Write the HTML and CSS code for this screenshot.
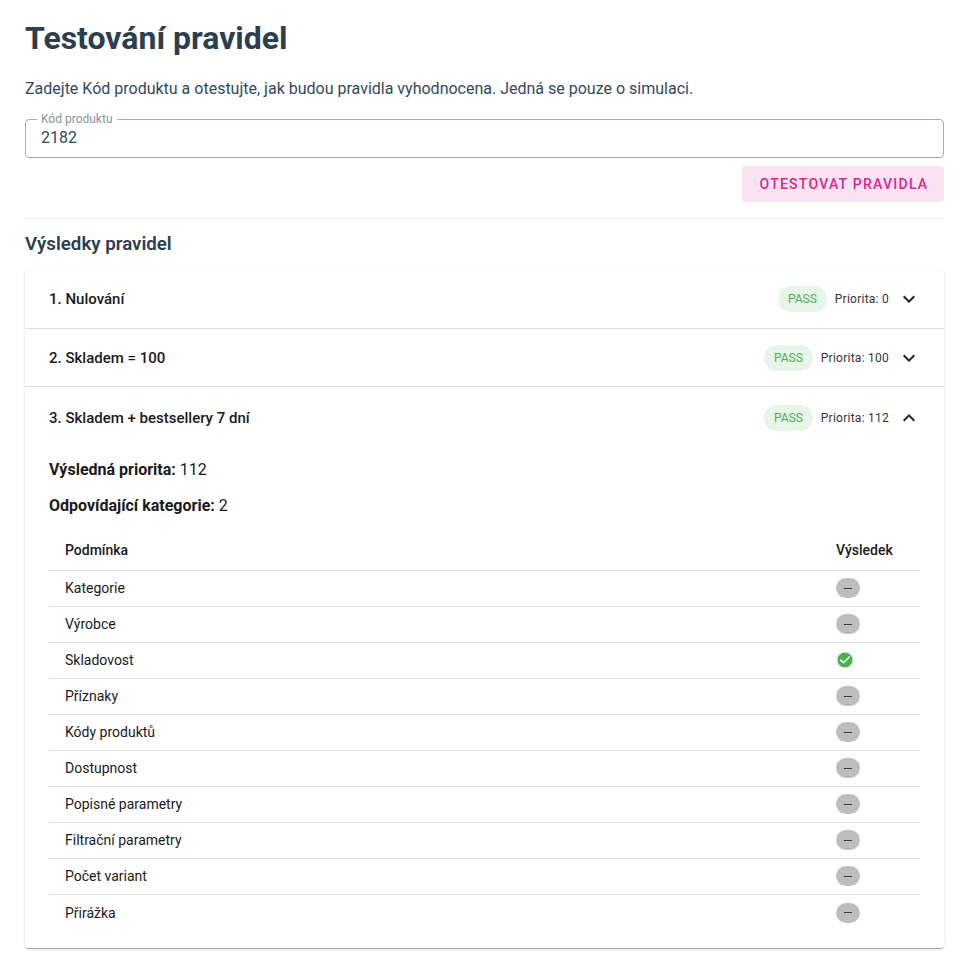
FILE: index.html
```html
<!DOCTYPE html>
<html lang="cs">
<head>
    <meta charset="UTF-8">
    <title>Testování pravidel</title>
    <link rel="stylesheet" href="styles.css">
</head>
<body>
    <main class="page">
        <h1 class="title">Testování pravidel</h1>
        <p class="intro">Zadejte Kód produktu a otestujte, jak budou pravidla vyhodnocena. Jedná se pouze o simulaci.</p>

        <fieldset class="field">
            <legend class="field-label">Kód produktu</legend>
            <input class="field-input" type="text" value="2182" aria-label="Kód produktu">
        </fieldset>

        <div class="actions">
            <button class="test-button" type="button">Otestovat pravidla</button>
        </div>

        <hr class="divider">

        <h2 class="subtitle">Výsledky pravidel</h2>

        <section class="accordion">
            <div class="rule">
                <div class="rule-header">
                    <span class="rule-name">1. Nulování</span>
                    <span class="pass">PASS</span>
                    <span class="priority">Priorita: 0</span>
                    <svg class="chevron" viewBox="0 0 24 24"><path d="M7.41 8.59 12 13.17l4.59-4.58L18 10l-6 6-6-6z"/></svg>
                </div>
            </div>
            <div class="rule">
                <div class="rule-header">
                    <span class="rule-name">2. Skladem = 100</span>
                    <span class="pass">PASS</span>
                    <span class="priority">Priorita: 100</span>
                    <svg class="chevron" viewBox="0 0 24 24"><path d="M7.41 8.59 12 13.17l4.59-4.58L18 10l-6 6-6-6z"/></svg>
                </div>
            </div>
            <div class="rule rule-open">
                <div class="rule-header">
                    <span class="rule-name">3. Skladem + bestsellery 7 dní</span>
                    <span class="pass">PASS</span>
                    <span class="priority">Priorita: 112</span>
                    <svg class="chevron" viewBox="0 0 24 24"><path d="M7.41 15.41 12 10.83l4.59 4.58L18 14l-6-6-6 6z"/></svg>
                </div>
                <div class="rule-body">
                    <p class="summary"><strong>Výsledná priorita:</strong> 112</p>
                    <p class="summary"><strong>Odpovídající kategorie:</strong> 2</p>
                    <table class="conditions">
                        <thead>
                            <tr><th>Podmínka</th><th class="result-col">Výsledek</th></tr>
                        </thead>
                        <tbody>
                            <tr><td>Kategorie</td><td class="result-col"><span class="na">---</span></td></tr>
                            <tr><td>Výrobce</td><td class="result-col"><span class="na">---</span></td></tr>
                            <tr>
                                <td>Skladovost</td>
                                <td class="result-col">
                                    <svg class="check" viewBox="0 0 24 24"><path d="M12 2C6.48 2 2 6.48 2 12s4.48 10 10 10 10-4.48 10-10S17.520 2 12 2zm-2 15-5-5 1.410-1.410L10 14.170l7.590-7.590L19 8l-9 9z"/></svg>
                                </td>
                            </tr>
                            <tr><td>Příznaky</td><td class="result-col"><span class="na">---</span></td></tr>
                            <tr><td>Kódy produktů</td><td class="result-col"><span class="na">---</span></td></tr>
                            <tr><td>Dostupnost</td><td class="result-col"><span class="na">---</span></td></tr>
                            <tr><td>Popisné parametry</td><td class="result-col"><span class="na">---</span></td></tr>
                            <tr><td>Filtrační parametry</td><td class="result-col"><span class="na">---</span></td></tr>
                            <tr><td>Počet variant</td><td class="result-col"><span class="na">---</span></td></tr>
                            <tr><td>Přirážka</td><td class="result-col"><span class="na">---</span></td></tr>
                        </tbody>
                    </table>
                </div>
            </div>
        </section>
    </main>
</body>
</html>
```

FILE: styles.css
```css
* {
    box-sizing: border-box;
    margin: 0;
    padding: 0;
}

body {
    background: #fff;
    color: #1a1a1a;
    font-family: Roboto, "Liberation Sans", sans-serif;
}

.page {
    padding: 16px 26px 24px 25px;
}

.title {
    color: #2c3e50;
    font-size: 32px;
    font-weight: 700;
    line-height: 44px;
    margin-bottom: 17px;
}

.intro {
    color: #34495e;
    font-size: 16px;
    line-height: 24px;
    margin-bottom: 12px;
}

.field {
    border: 1px solid #a5acb5;
    border-radius: 4px;
    height: 45px;
    padding: 0 15px;
}

.field-label {
    color: #8a949e;
    font-size: 12px;
    line-height: 12px;
    margin-left: -4px;
    padding: 0 4px;
}

.field-input {
    border: none;
    color: #34495e;
    display: block;
    font-family: inherit;
    font-size: 16px;
    height: 25px;
    outline: none;
    width: 100%;
}

.actions {
    display: flex;
    justify-content: flex-end;
    margin-top: 8px;
}

.test-button {
    background: #fae3f0;
    border: none;
    border-radius: 4px;
    color: #e02391;
    font-family: inherit;
    font-size: 14px;
    font-weight: 500;
    height: 36px;
    letter-spacing: 1.25px;
    padding-left: 2px;
    text-transform: uppercase;
    width: 202px;
}

.divider {
    border: none;
    border-top: 1px solid #ededed;
    margin: 16px 0 12px;
}

.subtitle {
    color: #2c3e50;
    font-size: 18.72px;
    font-weight: 600;
    line-height: 26px;
    margin-bottom: 13px;
}

.accordion {
    background: #fff;
    border-radius: 4px;
    box-shadow: 0 2px 1px -1px rgba(0, 0, 0, 0.2), 0 1px 1px rgba(0, 0, 0, 0.14), 0 1px 3px rgba(0, 0, 0, 0.12);
}

.rule + .rule {
    border-top: 1px solid #dcdcdc;
}

.rule-header {
    align-items: center;
    display: flex;
    height: 58px;
    padding: 0 24px;
}

.rule + .rule .rule-header {
    height: 57px;
}

.rule + .rule-open .rule-header {
    height: 62px;
}

.rule-name {
    flex: 1;
    font-size: 15px;
    font-weight: 500;
}

.pass {
    background: #e8f5e9;
    border-radius: 13px;
    color: #4caf50;
    font-size: 12px;
    line-height: 26px;
    margin-right: 8px;
    padding: 0 10px;
}

.priority {
    color: #333;
    font-size: 12px;
    letter-spacing: 0.25px;
    margin-right: 8px;
}

.chevron {
    fill: #222;
    height: 24px;
    width: 24px;
    margin-right: -1px;
}

.rule-body {
    padding: 9px 24px 17px;
}

.summary {
    font-size: 16px;
    line-height: 24px;
    margin-bottom: 12px;
}

.summary strong {
    font-weight: 700;
}

.conditions {
    border-collapse: collapse;
    margin-top: 1px;
    width: 100%;
}

.conditions th,
.conditions td {
    border-bottom: 1px solid #e0e0e0;
    font-size: 14px;
    height: 36px;
    padding: 0 16px;
    text-align: left;
}

.conditions th {
    font-weight: 500;
    height: 40px;
}

.conditions tr:last-child td {
    border-bottom: none;
    height: 37px;
}

.result-col {
    width: 100px;
}

.na {
    align-items: center;
    background: #bdbdbd;
    border-radius: 10px;
    color: #111;
    display: flex;
    font-size: 10px;
    height: 20px;
    justify-content: center;
    width: 24px;
}

.check {
    display: block;
    fill: #4caf50;
    height: 18px;
    width: 18px;
}
```
